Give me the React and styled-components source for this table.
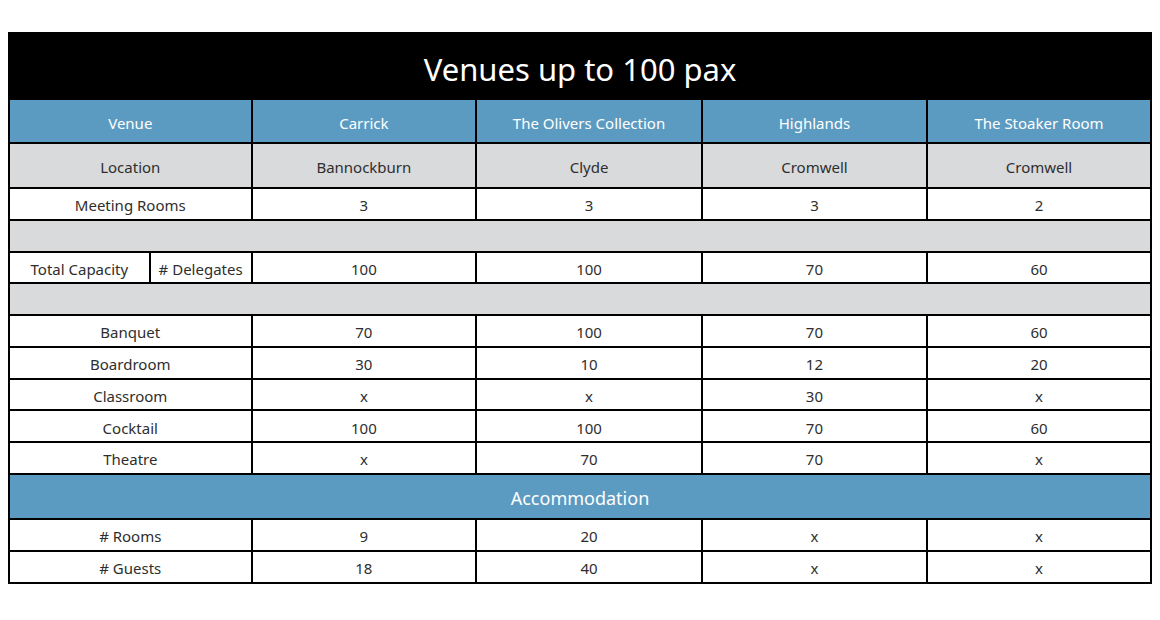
import React from "react";
import styled, { createGlobalStyle } from "styled-components";

const Global = createGlobalStyle`
  html, body { margin: 0; padding: 0; background: #fff; }
  body { margin: 8px; font-family: "Noto Sans", "Lato", sans-serif; }
`;

const Wrap = styled.div`
  padding-top: 24px;
`;

const Table = styled.table`
  width: 100%;
  border-collapse: collapse;
  table-layout: fixed;
  color: #2e2e2e;
  font-size: 15px;
`;

const Cell = styled.td`
  border: 2px solid #000;
  padding: 3px 0 0;
  text-align: center;
  vertical-align: middle;
  white-space: nowrap;
  height: ${(p) => p.$h || 26.75}px;
  background: ${(p) => (p.$bg === "gray" ? "#d9dadc" : p.$bg === "blue" ? "#5b9bc1" : "#fff")};
  color: ${(p) => (p.$bg === "blue" ? "#fff" : "#2e2e2e")};
`;

const TitleCell = styled.td`
  border: 2px solid #000;
  background: #000;
  color: #fff;
  font-size: 31px;
  text-align: center;
  height: 58px;
  padding: 6px 0 0;
`;

const SectionCell = styled(Cell)`
  font-size: 18px;
`;

const venues = ["Carrick", "The Olivers Collection", "Highlands", "The Stoaker Room"];
const locations = ["Bannockburn", "Clyde", "Cromwell", "Cromwell"];

const layouts = [
  ["Banquet", "70", "100", "70", "60"],
  ["Boardroom", "30", "10", "12", "20"],
  ["Classroom", "x", "x", "30", "x"],
  ["Cocktail", "100", "100", "70", "60"],
  ["Theatre", "x", "70", "70", "x"],
];

const accom = [
  ["# Rooms", "9", "20", "x", "x"],
  ["# Guests", "18", "40", "x", "x"],
];

function DataRow({ row, h }) {
  return (
    <tr>
      <Cell colSpan={2} $h={h}>{row[0]}</Cell>
      {row.slice(1).map((v, i) => (
        <Cell key={i} $h={h}>{v}</Cell>
      ))}
    </tr>
  );
}

export default function App() {
  return (
    <>
      <Global />
      <Wrap>
        <Table>
          <colgroup>
            <col style={{ width: "12.32%" }} />
            <col style={{ width: "8.92%" }} />
            <col style={{ width: "19.67%" }} />
            <col style={{ width: "19.76%" }} />
            <col style={{ width: "19.72%" }} />
            <col style={{ width: "19.61%" }} />
          </colgroup>
          <tbody>
            <tr>
              <TitleCell colSpan={6}>Venues up to 100 pax</TitleCell>
            </tr>
            <tr>
              <Cell colSpan={2} $bg="blue" $h={39}>Venue</Cell>
              {venues.map((v) => (
                <Cell key={v} $bg="blue" $h={39}>{v}</Cell>
              ))}
            </tr>
            <tr>
              <Cell colSpan={2} $bg="gray" $h={40}>Location</Cell>
              {locations.map((v, i) => (
                <Cell key={i} $bg="gray" $h={40}>{v}</Cell>
              ))}
            </tr>
            <DataRow row={["Meeting Rooms", "3", "3", "3", "2"]} />
            <tr>
              <Cell colSpan={6} $bg="gray" />
            </tr>
            <tr>
              <Cell>Total Capacity</Cell>
              <Cell># Delegates</Cell>
              <Cell>100</Cell>
              <Cell>100</Cell>
              <Cell>70</Cell>
              <Cell>60</Cell>
            </tr>
            <tr>
              <Cell colSpan={6} $bg="gray" />
            </tr>
            {layouts.map((r) => (
              <DataRow key={r[0]} row={r} />
            ))}
            <tr>
              <SectionCell colSpan={6} $bg="blue" $h={40}>Accommodation</SectionCell>
            </tr>
            {accom.map((r) => (
              <DataRow key={r[0]} row={r} h={27} />
            ))}
          </tbody>
        </Table>
      </Wrap>
    </>
  );
}
